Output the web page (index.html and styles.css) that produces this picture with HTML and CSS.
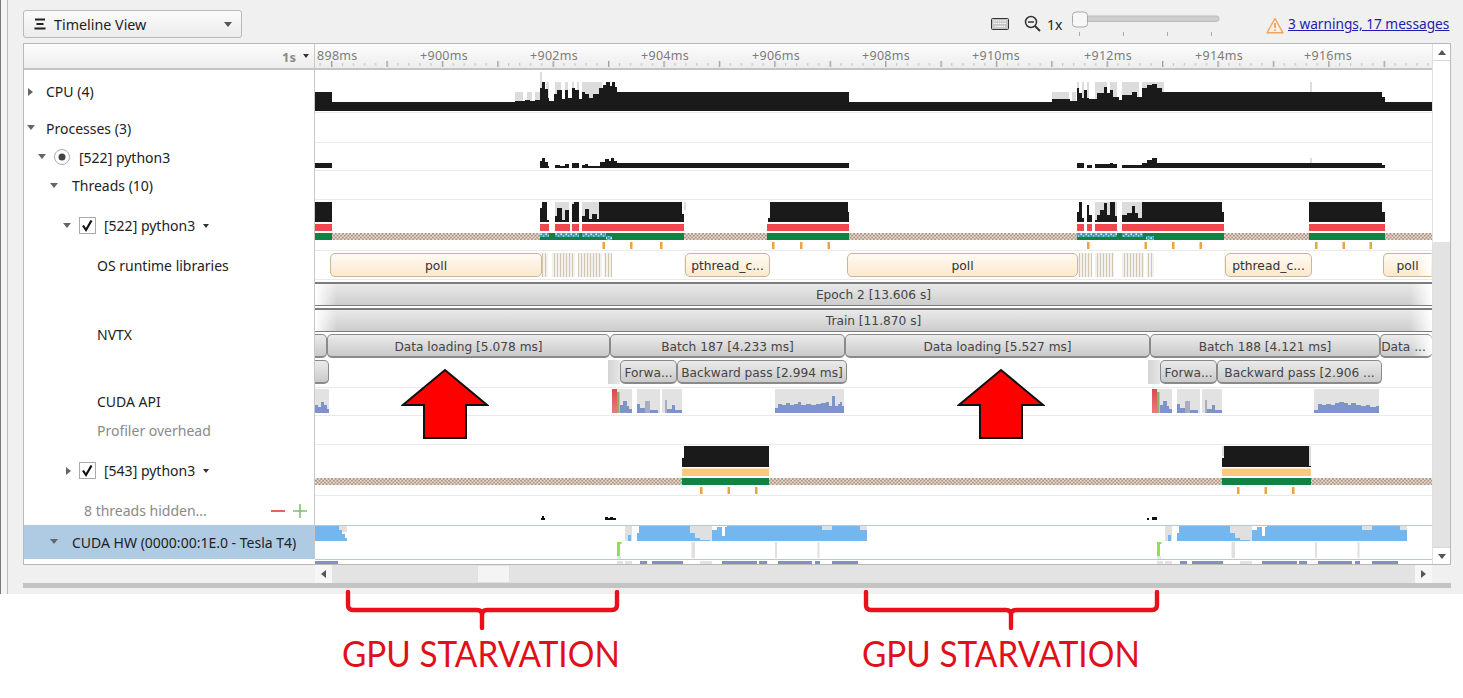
FILE: index.html
```html
<!DOCTYPE html>
<html lang="en">
<head>
<meta charset="utf-8">
<title>Timeline View</title>
<link rel="stylesheet" href="styles.css">
</head>
<body>
<svg class="defs" width="0" height="0" aria-hidden="true">
  <defs>
    <pattern id="dots" width="3.600" height="3.600" patternUnits="userSpaceOnUse" x="315" y="233">
      <rect width="3.600" height="3.600" fill="#ad9482"/>
      <circle cx="0.900" cy="0.900" r="0.950" fill="#f2eae1"/>
      <circle cx="2.700" cy="2.700" r="0.950" fill="#f2eae1"/>
    </pattern>
    <pattern id="dots2" width="3.600" height="3.600" patternUnits="userSpaceOnUse" x="315" y="478">
      <rect width="3.600" height="3.600" fill="#ad9482"/>
      <circle cx="0.900" cy="0.900" r="0.950" fill="#f2eae1"/>
      <circle cx="2.700" cy="2.700" r="0.950" fill="#f2eae1"/>
    </pattern>
    <pattern id="teal" width="5" height="4" patternUnits="userSpaceOnUse" x="540" y="233">
      <rect width="5" height="4" fill="#3c9fb8"/>
      <circle cx="1.200" cy="1.200" r="0.900" fill="#e4f2f4"/>
      <circle cx="3.600" cy="3" r="0.800" fill="#bfe2e8"/>
    </pattern>
    <pattern id="stripes" width="3" height="24" patternUnits="userSpaceOnUse" x="541" y="253">
      <rect width="3" height="24" fill="#f3f1ee"/>
      <rect x="1" width="1" height="24" fill="#d2c7b3"/>
    </pattern>
    <pattern id="ticks" width="55.400" height="8" patternUnits="userSpaceOnUse" x="331" y="0">
      <rect x="0" y="1" width="1.400" height="6" fill="#a0a0a0"/>
      <rect x="11" y="3" width="1" height="3" fill="#c0c0c0"/>
      <rect x="22" y="3" width="1" height="3" fill="#c0c0c0"/>
      <rect x="33" y="3" width="1" height="3" fill="#c0c0c0"/>
      <rect x="44" y="3" width="1" height="3" fill="#c0c0c0"/>
    </pattern>
    <linearGradient id="apiRed" x1="0" y1="0" x2="0" y2="1">
      <stop offset="0" stop-color="#e0484c"/>
      <stop offset="1" stop-color="#e87c7c"/>
    </linearGradient>
    <g id="apiBurst">
      <rect x="612" y="389" width="20" height="24" fill="#e2e2e2"/>
      <rect x="637" y="389" width="23" height="24" fill="#e2e2e2"/>
      <rect x="662" y="389" width="20" height="24" fill="#e2e2e2"/>
      <rect x="612" y="389" width="5" height="24" fill="url(#apiRed)"/>
      <rect x="617" y="392" width="2.500" height="21" fill="#86b26c"/>
      <path fill="#7f93cb" d="M620 413V405H623V401H627V406H629V409H632V413ZM637 413V404H640V408H645V413ZM650 413V410H658V413ZM667 413V409H672V405H675V410H682V413Z"/>
      <path fill="#a9adbd" d="M645 413V401H650V413ZM665 413V400H667V413Z"/>
    </g>
    <g id="hwBurst">
      <path fill="#e0e0e0" d="M625 526H632V541H625ZM690 526H712V541H690ZM822 526H832V532H822ZM860 526H867V532H860Z"/>
      <path fill="#74b7ee" d="M628 541V535H631V541ZM637 541V533H639V526H690V533H695V538H700V540H710V541ZM712 541V530H717V527H722V536H725V527H727V526H822V530H832V526H860V530H867V541Z"/>
      <rect x="617" y="542" width="3" height="14" fill="#8ee04c"/>
      <rect x="617" y="542" width="4.500" height="2" fill="#8ee04c"/>
      <rect x="617" y="556" width="4" height="3" fill="#e4e4e4"/>
      <rect x="691.500" y="542" width="3.500" height="16" fill="#e0e0e0"/>
      <rect x="775" y="542" width="2" height="16" fill="#e0e0e0"/>
      <rect x="817.500" y="542" width="2" height="16" fill="#e0e0e0"/>
      <path fill="#e2e2e2" d="M617 561H623V564H617ZM625 561H632V564H625ZM700 561H712V564H700Z"/>
      <path fill="#8390c0" d="M640 561H647V564H640ZM652 561H683V564H652ZM722 561H757V564H722ZM759 561H767V564H759ZM778 561H812V564H778ZM815 561H820V564H815ZM832 561H858V564H832Z"/>
    </g>
  </defs>
</svg>

<div class="window">
  <div class="inner">
    <div class="toolbar">
      <div class="dropdown">
        <svg class="menu-icon" width="12" height="12" viewBox="0 0 12 12"><path d="M1 1.500H11M2.500 6H9.500M0.500 10.500H11.500" stroke="#222" stroke-width="2"/></svg>
        <span class="dropdown-text">Timeline View</span>
        <span class="caret-large"></span>
      </div>
      <svg class="kbd" width="18" height="12" viewBox="0 0 18 12"><rect x="0.500" y="0.500" width="17" height="11" rx="1" fill="#c8c8c8" stroke="#333"/><path d="M2.500 3H15.500M2.500 5.500H15.500M4 8.500H14" stroke="#fff" stroke-width="1.200" stroke-dasharray="1.400 .8"/></svg>
      <svg class="zoom" width="17" height="17" viewBox="0 0 17 17"><circle cx="7" cy="7" r="5.500" fill="none" stroke="#333" stroke-width="1.500"/><path d="M4 7H10" stroke="#333" stroke-width="1.500"/><path d="M11 11L16 16" stroke="#333" stroke-width="2"/></svg>
      <span class="zoom-text">1x</span>
      <svg class="slider" width="148" height="26" viewBox="0 0 148 26"><rect x="2" y="5" width="145" height="5.500" rx="2.700" fill="#cfcfcf" stroke="#bbb"/><rect x="0.500" y="1" width="15" height="15" rx="3.500" fill="#f8f8f8" stroke="#aaa"/><path d="M7.500 21V25M51.500 21V25M95.500 21V25M139.500 21V25" stroke="#aaa"/></svg>
      <svg class="warn" width="18" height="17" viewBox="0 0 18 17"><path d="M9 1.500L17 15.800H1Z" fill="#fdf1e4" stroke="#eda464" stroke-width="1.400" stroke-linejoin="round"/><path d="M9 6V11M9 12.500V14" stroke="#e58b45" stroke-width="1.400"/></svg>
      <a class="link" href="#">3 warnings, 17 messages</a>
    </div>

    <div class="panel">
      <div class="panel-main">
        <div class="ruler-row">
          <div class="ruler-left"><span class="scale">1s</span><span class="caret-small"></span></div>
          <div class="ruler">
            <svg class="ruler-ticks" width="1117" height="8" viewBox="315 0 1117 8"><rect x="315" width="1117" height="8" fill="url(#ticks)"/></svg>
            <span class="tick-label" style="left:2px">898ms</span>
            <span class="tick-label" style="left:105px">+900ms</span>
            <span class="tick-label" style="left:215px">+902ms</span>
            <span class="tick-label" style="left:326px">+904ms</span>
            <span class="tick-label" style="left:437px">+906ms</span>
            <span class="tick-label" style="left:547px">+908ms</span>
            <span class="tick-label" style="left:657px">+910ms</span>
            <span class="tick-label" style="left:769px">+912ms</span>
            <span class="tick-label" style="left:880px">+914ms</span>
            <span class="tick-label" style="left:989px">+916ms</span>
          </div>
        </div>

        <div class="row h43">
          <div class="label pad-3"><span class="tw tw-right"></span><span class="t-11">CPU (4)</span></div>
          <div class="track">
            <svg class="chart" width="1117" height="42" viewBox="315 70 1117 42">
              <path fill="#dcdcdc" d="M515 92H523V102H515ZM527 92H532V102H527ZM535 92H540V102H535ZM540 72H542V92H540ZM546 82H549V100H546ZM555 82H561V100H555ZM565 82H568V100H565ZM572 82H574V100H572ZM577 82H579V100H577ZM582 82H602V100H582ZM1052 92H1069V102H1052ZM1072 92H1076V102H1072ZM1077 82H1079V100H1077ZM1082 82H1084V100H1082ZM1087 82H1089V100H1087ZM1095 82H1107V100H1095ZM1110 82H1117V100H1110ZM1122 82H1139V100H1122ZM1142 82H1164V100H1142ZM1310 82H1312V92H1310Z"/>
              <path fill="#1a1a1a" d="M315 111V92H332V102H515V101H525V100H530V101H535V100H540V88H542V82H545V89H548V98H549V101H554V94H557V90H562V99H565V90H568V98H572V88H575V90H579V99H582V92H585V94H589V98H593V94H599V88H603V85H606V82H610V86H612V82H615V87H617V92H849V102H1052V99H1070V101H1077V88H1079V93H1082V98H1084V90H1087V98H1089V99H1097V93H1104V87H1107V93H1110V90H1113V97H1119V100H1122V95H1132V92H1137V97H1142V88H1147V85H1152V84H1157V88H1162V92H1382V97H1385V102H1432V111Z"/>
            </svg>
          </div>
        </div>

        <div class="row h30">
          <div class="label pad-3"><span class="tw tw-down"></span><span class="t-11">Processes (3)</span></div>
          <div class="track"></div>
        </div>

        <div class="row h28">
          <div class="label pad-14">
            <span class="tw tw-down"></span>
            <svg class="radio" width="16" height="16" viewBox="0 0 16 16"><circle cx="8" cy="8" r="7.500" fill="#fff" stroke="#aaa"/><circle cx="8" cy="8" r="3.500" fill="#444"/></svg>
            <span>[522] python3</span>
          </div>
          <div class="track">
            <svg class="chart" width="1117" height="27" viewBox="315 143 1117 27">
              <path fill="#dcdcdc" d="M1310 158H1312V163H1310Z"/>
              <path fill="#1a1a1a" d="M315 168V163H332V168ZM540 168V161H542V158H545V162H548V166H549V168ZM555 168V165H560V166H565V164H569V168ZM572 168V163H579V168ZM582 168V165H585V164H588V166H598V168ZM598 168V166H600V162H605V159H609V161H611V158H614V161H617V163H849V168ZM1077 168V163H1084V168ZM1087 168V165H1092V168ZM1095 168V164H1110V163H1113V164H1117V168ZM1122 168V165H1142V163H1147V160H1152V158H1157V163H1382V165H1385V168Z"/>
            </svg>
          </div>
        </div>

        <div class="row h29">
          <div class="label pad-26"><span class="tw tw-down"></span><span class="t-13">Threads (10)</span></div>
          <div class="track"></div>
        </div>

        <div class="row h51">
          <div class="label pad-39">
            <span class="tw tw-down"></span>
            <svg class="check" width="17" height="17" viewBox="0 0 17 17"><rect x="0.500" y="0.500" width="16" height="16" fill="#fff" stroke="#aaa"/><path d="M4 8.500L7 13L12.500 3.500" fill="none" stroke="#111" stroke-width="2.200"/></svg>
            <span>[522] python3</span>
            <span class="caret-small caret-gap"></span>
          </div>
          <div class="track">
            <svg class="chart" width="1117" height="50" viewBox="315 200 1117 50">
              <path fill="#dcdcdc" d="M555 202H569V222H555ZM572 202H579V222H572ZM582 202H599V222H582ZM684 202H686V210H684ZM1095 202H1117V222H1095ZM1122 202H1142V222H1122Z"/>
              <path fill="#1a1a1a" d="M315 222V202H332V222ZM540 222V208H542V202H547V220H549V222ZM555 222V216H557V208H562V220H565V210H569V222ZM572 222V204H574V202H579V222ZM582 222V216H585V209H589V219H592V214H597V219H599V202H682V214H684V222ZM768 222V218H770V202H848V212H849V222ZM1077 222V212H1079V202H1082V218H1084V222ZM1087 222V205H1089V215H1092V222ZM1095 222V220H1097V215H1100V210H1104V203H1107V215H1110V202H1115V216H1117V222ZM1122 222V215H1127V213H1132V206H1135V213H1138V218H1142V202H1222V212H1224V222ZM1309 222V202H1382V212H1385V222Z"/>
              <path fill="#f0484f" d="M315 224H332V231H315ZM540 224H549V231H540ZM555 224H570V231H555ZM572 224H579V231H572ZM582 224H684V231H582ZM767 224H849V231H767ZM1077 224H1084V231H1077ZM1087 224H1092V231H1087ZM1095 224H1117V231H1095ZM1122 224H1224V231H1122ZM1309 224H1385V231H1309Z"/>
              <rect x="315" y="233" width="1117" height="7" fill="url(#dots)"/>
              <path fill="#128243" d="M315 233H332V240H315ZM540 233H684V240H540ZM767 233H849V240H767ZM1077 233H1224V240H1077ZM1309 233H1385V240H1309Z"/>
              <path fill="url(#teal)" d="M540 233H549V237H540ZM555 233H579V237H555ZM582 233H606V237H582ZM606 236H612V240H606ZM1077 233H1117V237H1077ZM1122 233H1143V237H1122ZM1146 236H1154V240H1146Z"/>
              <path fill="#eda33c" d="M602.500 242H605V249H602.500ZM630 242H632.500V249H630ZM660 242H662.500V249H660ZM772 242H774.500V249H772ZM800 242H802.500V249H800ZM827.500 242H830V249H827.500ZM1087 242H1089.500V249H1087ZM1144.500 242H1147V249H1144.500ZM1172 242H1174.500V249H1172ZM1199.500 242H1202V249H1199.500ZM1315 242H1317.500V249H1315ZM1342.500 242H1345V249H1342.500ZM1369.500 242H1372V249H1369.500Z"/>
            </svg>
          </div>
        </div>

        <div class="row h29">
          <div class="label pad-73"><span>OS runtime libraries</span></div>
          <div class="track">
            <svg class="chart" width="1117" height="28" viewBox="315 251 1117 28">
              <path fill="url(#stripes)" d="M541 253H548V277H541ZM552 253H575V277H552ZM578 253H602V277H578ZM604 253H612V277H604ZM684 253H685V277H684ZM1078 253H1092V277H1078ZM1095 253H1114V277H1095ZM1122 253H1144V277H1122ZM1147 253H1154V277H1147ZM1224 253H1225V277H1224Z"/>
            </svg>
            <span class="pill" style="left:15px;width:212px">poll</span>
            <span class="pill" style="left:370px;width:85px">pthread_c...</span>
            <span class="pill" style="left:532px;width:231px">poll</span>
            <span class="pill" style="left:910px;width:87px">pthread_c...</span>
            <span class="pill pill-fade" style="left:1068px;width:49px">poll</span>
          </div>
        </div>

        <div class="row h108">
          <div class="label pad-73"><span>NVTX</span></div>
          <div class="track lanes">
            <div class="lane"><span class="bar bar-long">Epoch 2 [13.606 s]</span></div>
            <div class="lane"><span class="bar bar-long">Train [11.870 s]</span></div>
            <div class="lane">
              <span class="bar" style="left:-8px;width:20px"></span>
              <span class="bar" style="left:12px;width:283px">Data loading [5.078 ms]</span>
              <span class="bar" style="left:295px;width:235px">Batch 187 [4.233 ms]</span>
              <span class="bar" style="left:530px;width:305px">Data loading [5.527 ms]</span>
              <span class="bar" style="left:835px;width:230px">Batch 188 [4.121 ms]</span>
              <span class="bar bar-end" style="left:1065px;width:52px">Data ...</span>
            </div>
            <div class="lane">
              <span class="bar" style="left:-8px;width:22px"></span>
              <span class="bar bar-plain" style="left:293px;width:12px"></span>
              <span class="bar" style="left:305px;width:57px">Forwa...</span>
              <span class="bar" style="left:362px;width:170px">Backward pass [2.994 ms]</span>
              <span class="bar bar-plain" style="left:833px;width:12px"></span>
              <span class="bar" style="left:845px;width:57px">Forwa...</span>
              <span class="bar" style="left:902px;width:165px">Backward pass [2.906 ...</span>
            </div>
          </div>
        </div>

        <div class="row h28">
          <div class="label pad-73 label-up"><span>CUDA API</span></div>
          <div class="track">
            <svg class="chart" width="1117" height="27" viewBox="315 388 1117 27">
              <rect x="315" y="389" width="14" height="24" fill="#e2e2e2"/>
              <path fill="#7f93cb" d="M315 413V405H318V407H321V402H324V405H327V409H329V413Z"/>
              <use href="#apiBurst"/>
              <use href="#apiBurst" x="540"/>
              <rect x="775" y="389" width="69" height="24" fill="#e2e2e2"/>
              <rect x="1314" y="389" width="65" height="24" fill="#e2e2e2"/>
              <path fill="#7f93cb" d="M775 413V408H778V404H782V405H786V403H790V405H794V404H798V402H801V405H806V404H811V405H816V404H821V403H826V402H829V406H832V396H835V406H838V404H840V402H842V406H844V413ZM1314 413V410H1318V404H1322V405H1326V404H1331V405H1335V403H1339V402H1344V403H1348V405H1351V403H1356V405H1361V406H1366V405H1370V407H1376V406H1379V413Z"/>
            </svg>
          </div>
        </div>

        <div class="row h29">
          <div class="label pad-73 muted"><span>Profiler overhead</span></div>
          <div class="track"></div>
        </div>

        <div class="row h51">
          <div class="label pad-39">
            <span class="tw tw-right tw-inset"></span>
            <svg class="check" width="17" height="17" viewBox="0 0 17 17"><rect x="0.500" y="0.500" width="16" height="16" fill="#fff" stroke="#aaa"/><path d="M4 8.500L7 13L12.500 3.500" fill="none" stroke="#111" stroke-width="2.200"/></svg>
            <span>[543] python3</span>
            <span class="caret-small caret-gap"></span>
          </div>
          <div class="track">
            <svg class="chart" width="1117" height="50" viewBox="315 445 1117 50">
              <path fill="#dcdcdc" d="M1222 446H1225V456H1222ZM1308 446H1311V467H1308Z"/>
              <path fill="#1a1a1a" d="M682 467V458H684V446H769V467ZM1222 467V458H1224V446H1309V466H1311V467Z"/>
              <path fill="#f8c97e" d="M682 468.500H769V476H682ZM1222 468.500H1311V476H1222Z"/>
              <rect x="315" y="478" width="1117" height="7" fill="url(#dots2)"/>
              <path fill="#128243" d="M682 478H769V485H682ZM1222 478H1311V485H1222Z"/>
              <path fill="#eda33c" d="M700 487H702.500V494H700ZM727.500 487H730V494H727.500ZM755 487H757.500V494H755ZM1237 487H1239.500V494H1237ZM1264.500 487H1267V494H1264.500ZM1292 487H1294.500V494H1292Z"/>
            </svg>
          </div>
        </div>

        <div class="row h29">
          <div class="label pad-60 muted">
            <span>8 threads hidden...</span>
            <svg class="plusminus" width="36" height="14" viewBox="0 0 36 14"><path d="M0 7H14" stroke="#e8615b" stroke-width="2"/><path d="M22 7H36M29 0V14" stroke="#7fbf73" stroke-width="1.600"/></svg>
          </div>
          <div class="track no-line">
            <svg class="chart" width="1117" height="29" viewBox="315 496 1117 29">
              <path fill="#111" d="M541 520V518H542V516H544V518H545V520ZM605 520V517H608V518H610V517H613V518H616V520ZM1147 520V518H1149V520ZM1152 520V517H1157V520Z"/>
            </svg>
          </div>
        </div>

        <div class="row h39 row-hw">
          <div class="label pad-26 selected"><span class="tw tw-down"></span><span class="t-13">CUDA HW (0000:00:1E.0 - Tesla T4)</span></div>
          <div class="track no-line">
            <svg class="chart" width="1117" height="39" viewBox="315 525 1117 39">
              <path fill="#b4c8da" d="M315 525H1432V526H315ZM315 559H1432V560H315Z"/>
              <path fill="#e0e0e0" d="M339 526H347V532H339Z"/>
              <path fill="#74b7ee" d="M315 541V526H339V530H342V534H345V538H347V541Z"/>
              <path fill="#8390c0" d="M315 561H338V564H315Z"/>
              <use href="#hwBurst"/>
              <use href="#hwBurst" x="540"/>
            </svg>
          </div>
        </div>
      </div>

      <div class="vscroll">
        <span class="vbtn"><span class="up"></span></span>
        <span class="vthumb"></span>
        <span class="vtrack"></span>
        <span class="vbtn vbtn-bottom"><span class="down"></span></span>
      </div>
    </div>

    <div class="hscroll">
      <span class="hbtn"><span class="left"></span></span>
      <span class="htrack htrack-a"></span>
      <span class="hthumb"></span>
      <span class="htrack htrack-b"></span>
      <span class="hbtn"><span class="right"></span></span>
    </div>
    <div class="bottom-bar"></div>
  </div>
</div>

<div class="notes">
  <div class="note note-a">
    <svg class="bracket" width="290" height="40" viewBox="342 590 290 40"><path d="M348 592V605Q348 610 353 610H477Q482 610 482 615V628M482 615Q482 610 487 610H612Q617 610 617 605V592" fill="none" stroke="#e8101a" stroke-width="4.400" stroke-linecap="round"/></svg>
    <div class="note-text">GPU STARVATION</div>
  </div>
  <div class="note note-b">
    <svg class="bracket" width="300" height="40" viewBox="862 590 300 40"><path d="M866 592V605Q866 610 871 610H1006Q1011 610 1011 615V628M1011 615Q1011 610 1016 610H1152Q1157 610 1157 605V592" fill="none" stroke="#e8101a" stroke-width="4.400" stroke-linecap="round"/></svg>
    <div class="note-text">GPU STARVATION</div>
  </div>
</div>

<svg class="arrow arrow-a" width="88" height="72" viewBox="401 368 88 72"><path d="M445 370L487 405H466V438H424V405H403Z" fill="#fe0000" stroke="#111" stroke-width="2"/></svg>
<svg class="arrow arrow-b" width="88" height="72" viewBox="401 368 88 72"><path d="M445 370L487 405H466V438H424V405H403Z" fill="#fe0000" stroke="#111" stroke-width="2"/></svg>
</body>
</html>
```
FILE: styles.css
```css
* { box-sizing: border-box; }

html, body {
  margin: 0;
  padding: 0;
}

body {
  position: relative;
  width: 1463px;
  height: 698px;
  overflow: hidden;
  background: #fff;
  font-family: "Noto Sans", "Open Sans", sans-serif;
  font-size: 14px;
  color: #222;
}

.defs { position: absolute; }

.window {
  height: 594px;
  padding-left: 6px;
  border-left: 1px solid #777;
  background: #f4f4f4;
}

.inner {
  height: 100%;
  padding-left: 15px;
  border-left: 1px solid #bdbdbd;
  background: #f0f0f0;
}

/* toolbar */
.toolbar {
  display: flex;
  align-items: flex-start;
  width: 1428px;
  height: 43px;
  padding-top: 10px;
}

.toolbar > * { flex-shrink: 0; }

.dropdown {
  display: flex;
  align-items: center;
  width: 219px;
  height: 28px;
  padding: 0 9px 0 10px;
  border: 1px solid #b9b9b9;
  border-radius: 3px;
  background: linear-gradient(#fbfbfb, #ececec);
}

.dropdown-text { margin-left: 8px; font-size: 14.300px; }

.caret-large {
  margin-left: auto;
  width: 0;
  height: 0;
  border-left: 4.500px solid transparent;
  border-right: 4.500px solid transparent;
  border-top: 5px solid #555;
}

.kbd { margin: 8px 0 0 749px; }
.zoom { margin: 5px 0 0 15px; }
.zoom-text { margin: 5px 0 0 6px; width: 14px; font-size: 14px; }
.slider { margin: 1px 0 0 11px; }
.warn { margin: 7px 0 0 46px; }

.link {
  margin: 4px 0 0 4px;
  color: #1d1dab;
  font-size: 13.700px;
  white-space: nowrap;
  text-decoration: underline;
}

/* panel */
.panel {
  display: flex;
  width: 1428px;
  height: 522px;
  border: 1px solid #b8b8b8;
  background: #fff;
}

.panel-main { width: 1408px; }

.ruler-row {
  display: flex;
  height: 26px;
  border-bottom: 2px solid #c4c4c4;
  background: linear-gradient(#fdfdfd, #ededed);
}

.ruler-left {
  display: flex;
  align-items: center;
  justify-content: flex-end;
  width: 291px;
  padding-right: 5px;
  border-right: 1px solid #c8c8c8;
  color: #8a8a8a;
}

.scale { font-size: 13px; font-weight: 700; margin-top: 2px; }

.ruler { position: relative; flex: 1; overflow: hidden; }

.ruler-ticks { position: absolute; left: 0; bottom: 0; }

.tick-label {
  position: absolute;
  top: 3px;
  font-size: 12.500px;
  letter-spacing: 0.300px;
  color: #7c7c7c;
}

/* rows */
.row { display: flex; }
.h28 { height: 28px; }
.h29 { height: 29px; }
.h30 { height: 30px; }
.h39 { height: 39px; }
.h43 { height: 43px; }
.h51 { height: 51px; }
.h108 { height: 108px; }

.label {
  display: flex;
  align-items: center;
  flex: 0 0 291px;
  border-right: 1px solid #c8c8c8;
  white-space: nowrap;
}

.label-up { padding-bottom: 2px; }

.pad-3 { padding-left: 3px; }
.pad-14 { padding-left: 14px; }
.pad-26 { padding-left: 26px; }
.pad-39 { padding-left: 39px; }
.pad-60 { padding-left: 60px; }
.pad-73 { padding-left: 73px; }

.muted { color: #8a8a8a; }

.selected {
  align-self: flex-start;
  height: 34px;
  background: #afcbe4;
}

.row-hw { background: #fff; }

.tw {
  flex: 0 0 8px;
  width: 8px;
  height: 8px;
  margin-right: 8px;
  position: relative;
}

.tw::before {
  content: "";
  position: absolute;
  border-style: solid;
  border-color: transparent;
}

.tw-down::before {
  left: 0;
  top: 1px;
  border-width: 5px 4.500px 0;
  border-top-color: #666;
}

.tw-right::before {
  left: 1px;
  top: 0;
  border-width: 4.500px 0 4.500px 5px;
  border-left-color: #666;
}

.tw-inset::before { left: 3px; }

.t-11 { margin-left: 3px; }
.t-13 { margin-left: 6px; }

.radio { margin-right: 9px; }
.check { margin-right: 8px; }

.caret-small {
  display: inline-block;
  width: 0;
  height: 0;
  margin-left: 7px;
  border-left: 3.500px solid transparent;
  border-right: 3.500px solid transparent;
  border-top: 4px solid #333;
}

.caret-gap { margin-left: 8px; }

.plusminus { margin-left: auto; margin-right: 7px; }

.track {
  position: relative;
  flex: 0 0 1117px;
  border-bottom: 1px solid #e9e9e9;
  overflow: hidden;
}

.no-line { border-bottom: 0; }

.chart { display: block; }

/* OS runtime pills */
.pill {
  position: absolute;
  top: 2px;
  height: 24px;
  line-height: 25px;
  border: 1px solid #c9b795;
  border-radius: 5px;
  background: linear-gradient(#fffaf2, #fbe9cf);
  text-align: center;
  font-family: "DejaVu Sans", sans-serif;
  font-size: 12.300px;
  color: #333;
  overflow: hidden;
}

.pill-fade {
  border-right-color: transparent;
  border-top-right-radius: 0;
  border-bottom-right-radius: 0;
  background: linear-gradient(to right, transparent 70%, #fff), linear-gradient(#fffaf2, #fbe9cf);
}

/* NVTX */
.lanes { padding-top: 2px; }

.lane {
  position: relative;
  height: 26px;
}

.bar {
  position: absolute;
  top: 0;
  height: 24px;
  line-height: 25px;
  border: 1px solid #8a8a8a;
  border-bottom-width: 2px;
  border-radius: 5px;
  background: linear-gradient(#ebebeb, #cacaca);
  text-align: center;
  font-family: "DejaVu Sans", sans-serif;
  font-size: 12.200px;
  color: #444;
  white-space: nowrap;
  overflow: hidden;
}

.bar-long {
  left: 0;
  width: 1117px;
  line-height: 23px;
  border-width: 2px 0 1px;
  border-color: #7c7c7c;
  border-radius: 0;
  background:
    linear-gradient(to right, #fff, transparent 22px, transparent calc(100% - 22px), #fff),
    linear-gradient(#e9e9e9, #cdcdcd);
}

.bar-end {
  border-right: 0;
  padding-right: 6px;
  background:
    linear-gradient(to right, transparent 60%, #fff),
    linear-gradient(#ebebeb, #cacaca);
}

.bar-plain {
  border: 0;
  border-radius: 0;
  background: linear-gradient(to right, #d4d4d4, #e6e6e6);
}

/* scrollbars */
.vscroll {
  display: flex;
  flex-direction: column;
  width: 18px;
  background: #fff;
  border-left: 1px solid #e0e0e0;
}

.vbtn {
  display: flex;
  align-items: center;
  justify-content: center;
  flex: 0 0 17px;
  background: #fff;
  border-bottom: 1px solid #d8d8d8;
}

.vbtn-bottom { border-bottom: 0; border-top: 1px solid #d8d8d8; }

.vthumb { flex: 0 0 181px; background: #fff; }
.vtrack { flex: 1; background: #e3e3e3; }

.up, .down, .left, .right { width: 0; height: 0; border-style: solid; border-color: transparent; }
.up { border-width: 0 4.500px 5px; border-bottom-color: #555; }
.down { border-width: 5px 4.500px 0; border-top-color: #555; }
.left { border-width: 4.500px 5px 4.500px 0; border-right-color: #555; }
.right { border-width: 4.500px 0 4.500px 5px; border-left-color: #555; }

.hscroll {
  display: flex;
  height: 18px;
  margin-left: 292px;
  width: 1117px;
}

.hbtn {
  display: flex;
  align-items: center;
  justify-content: center;
  flex: 0 0 17px;
  background: #f6f6f6;
}

.htrack { background: #e3e3e3; }
.htrack-a { flex: 0 0 145px; }
.htrack-b { flex: 1; }
.hthumb { flex: 0 0 33px; background: #f4f4f4; border: 1px solid #e0e0e0; }

.bottom-bar {
  width: 1428px;
  height: 5px;
  background: #c4c4c4;
}

/* annotations */
.notes {
  position: relative;
  display: flex;
  margin-top: -4px;
  padding-left: 342px;
}

.note { flex: 0 0 auto; }
.note-a { width: 520px; }
.note-b { width: 300px; }

.bracket { display: block; }

.note-text {
  margin-top: 1px;
  font-family: "Lato", sans-serif;
  font-size: 36px;
  line-height: 44px;
  color: #e0101a;
  white-space: nowrap;
  transform: scaleX(0.926);
  transform-origin: left center;
}

/* red arrows lying over the chart */
.arrow { position: absolute; top: 368px; pointer-events: none; }
.arrow-a { left: 401px; }
.arrow-b { left: 957px; }
```
